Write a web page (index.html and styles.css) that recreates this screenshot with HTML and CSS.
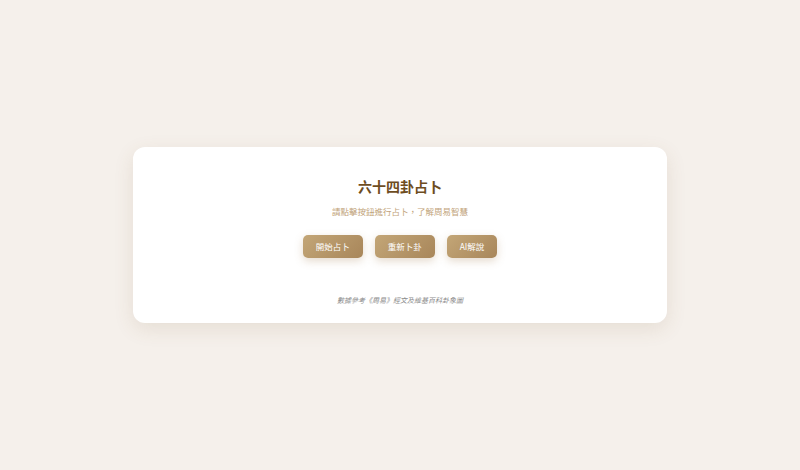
FILE: index.html
```html
<!DOCTYPE html>
<html lang="zh-Hant">
<head>
<meta charset="utf-8">
<title>六十四卦占卜</title>
<link rel="stylesheet" href="styles.css">
</head>
<body>
<main class="card">
  <h1 class="title">六十四卦占卜</h1>
  <p class="subtitle">請點擊按鈕進行占卜，了解周易智慧</p>
  <div class="actions">
    <button class="btn">開始占卜</button>
    <button class="btn">重新卜卦</button>
    <button class="btn">AI解說</button>
  </div>
  <p class="footer">數據參考《周易》經文及維基百科卦象圖</p>
</main>
</body>
</html>
```
FILE: styles.css
```css
html, body {
  margin: 0;
  padding: 0;
}
body {
  width: 800px;
  height: 470px;
  background: #f5f0eb;
  display: flex;
  align-items: center;
  justify-content: center;
  font-family: "Noto Sans CJK TC", "Noto Sans", sans-serif;
}
.card {
  width: 534px;
  height: 176px;
  box-sizing: border-box;
  background: #ffffff;
  border-radius: 12px;
  box-shadow: 0 6px 20px rgba(120, 90, 50, 0.12);
  padding: 29px 0 18px;
  display: flex;
  flex-direction: column;
  align-items: center;
}
.title {
  margin: 0;
  font-size: 14px;
  line-height: 20px;
  font-weight: 700;
  color: #6e4d1f;
}
.subtitle {
  margin: 9px 0 0;
  font-size: 8.5px;
  line-height: 12px;
  color: #c1a37a;
}
.actions {
  margin-top: 18px;
  display: flex;
  gap: 12px;
}
.btn {
  height: 23px;
  padding: 0 13px;
  border: none;
  border-radius: 5px;
  background: linear-gradient(135deg, #c3a677 0%, #a8865a 100%);
  color: #ffffff;
  font-family: "Noto Sans CJK TC", "Noto Sans", sans-serif;
  font-size: 8.5px;
  line-height: 23px;
  box-shadow: 0 3px 8px rgba(168, 134, 90, 0.3);
}
.footer {
  margin: 37px 0 0;
  font-size: 7px;
  line-height: 10px;
  font-style: italic;
  color: #8a8a8a;
}
```
